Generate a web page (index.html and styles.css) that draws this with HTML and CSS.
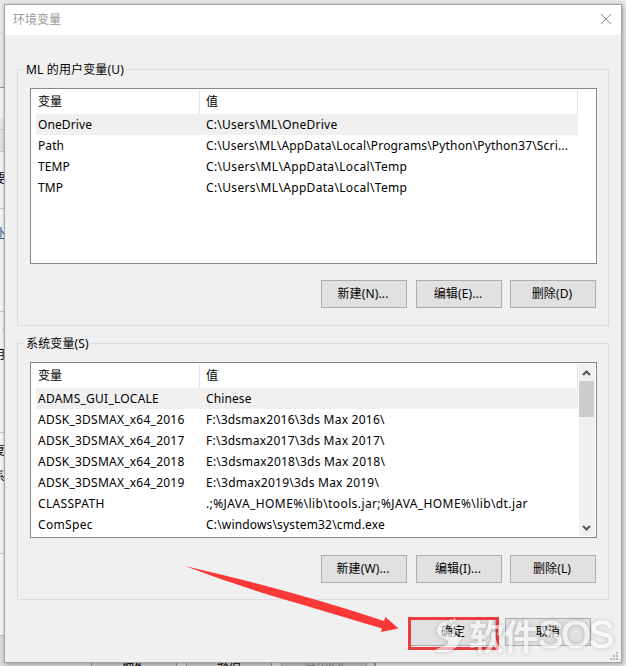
FILE: index.html
```html
<!DOCTYPE html>
<html lang="zh-CN">
<head>
<meta charset="utf-8">
<title>环境变量</title>
<link rel="stylesheet" href="styles.css">
</head>
<body>
<div class="behind">
  <div class="strip">
    <i class="band b1"></i><i class="band b2"></i><i class="band b3"></i><i class="band b4"></i><i class="band b5"></i><i class="band b6"></i><i class="band b7"></i><i class="band b8"></i>
    <span class="t1">要</span><span class="t2 blue">处</span><span class="t3">用</span><span class="t4">复</span><span class="t5">系</span>
  </div>
  <div class="back-buttons"><span>确定</span><span>取消</span><span class="disabled">应用(A)</span></div>
</div>
<main class="dialog">
  <header class="title"><span>环境变量</span>
    <svg class="close" width="12" height="12" viewBox="0 0 12 12"><path d="M1 1 11 11M11 1 1 11"/></svg>
  </header>
  <section class="group user">
    <h2>ML 的用户变量(U)</h2>
    <div class="list">
      <div class="table">
        <div class="head"><span>变量</span><span>值</span></div>
        <div class="row selected"><span>OneDrive</span><span class="ls2">C:\Users\ML\OneDrive</span></div>
        <div class="row"><span>Path</span><span class="ls1">C:\Users\ML\AppData\Local\Programs\Python\Python37\Scri...</span></div>
        <div class="row"><span>TEMP</span><span class="ls3">C:\Users\ML\AppData\Local\Temp</span></div>
        <div class="row"><span>TMP</span><span class="ls3">C:\Users\ML\AppData\Local\Temp</span></div>
      </div>
    </div>
    <div class="actions"><button>新建(N)...</button><button>编辑(E)...</button><button>删除(D)</button></div>
  </section>
  <section class="group system">
    <h2>系统变量(S)</h2>
    <div class="list">
      <div class="table">
        <div class="head"><span>变量</span><span>值</span></div>
        <div class="row selected"><span class="ls2">ADAMS_GUI_LOCALE</span><span>Chinese</span></div>
        <div class="row"><span class="ls2">ADSK_3DSMAX_x64_2016</span><span class="ls2">F:\3dsmax2016\3ds Max 2016\</span></div>
        <div class="row"><span class="ls2">ADSK_3DSMAX_x64_2017</span><span class="ls2">F:\3dsmax2017\3ds Max 2017\</span></div>
        <div class="row"><span class="ls2">ADSK_3DSMAX_x64_2018</span><span class="ls2">E:\3dsmax2018\3ds Max 2018\</span></div>
        <div class="row"><span class="ls2">ADSK_3DSMAX_x64_2019</span><span class="ls2">E:\3dmax2019\3ds Max 2019\</span></div>
        <div class="row"><span class="ls3">CLASSPATH</span><span class="ls4">.;%JAVA_HOME%\lib\tools.jar;%JAVA_HOME%\lib\dt.jar</span></div>
        <div class="row"><span class="ls3">ComSpec</span><span class="ls1">C:\windows\system32\cmd.exe</span></div>
      </div>
      <div class="scrollbar">
        <svg width="16" height="17" viewBox="0 0 16 17"><path d="M4 11 7.500 7.500 11 11"/></svg>
        <div class="thumb"></div>
        <svg class="down" width="16" height="17" viewBox="0 0 16 17"><path d="M4 7 7.500 10.500 11 7"/></svg>
      </div>
    </div>
    <div class="actions"><button>新建(W)...</button><button>编辑(I)...</button><button>删除(L)</button></div>
  </section>
  <footer class="bottom"><button>确定</button><button>取消</button></footer>
  <svg class="grip" width="9" height="9" viewBox="0 0 9 9"><path d="M6 0h2v2H6zM3 3h2v2H3zM6 3h2v2H6zM0 6h2v2H0zM3 6h2v2H3zM6 6h2v2H6z"/></svg>
</main>
<svg class="arrow" width="216" height="68" viewBox="184 565 216 68"><path d="M185 566Q290 590 384 621L385.500 617 398.500 628.500 381 632 382 628.500 300 604Q240 587 185 566z"/></svg>
<div class="highlight"></div>
<div class="watermark">
  <svg width="36" height="38" viewBox="0 0 36 38"><path d="M15 5C6 6 2 12 5 18c3 5 10 4 10 8 0 4-8 4-14 9 8 3 19 1 24-6 4-8-2-11-8-13-6-3-5-7-2-11zM17 3l3 1-1 3-3-1zM21 1l2 3-3 2zM20 8l4 1-1 3-4-1z"/><path d="M7 35C15 33 23 25 29 18c-1 10-10 19-22 17z"/></svg><span class="wm-cn">软件</span><span class="wm-en">SOS</span>
</div>
</body>
</html>
```
FILE: styles.css
```css
* { box-sizing: border-box; }
body {
  margin: 0; width: 626px; height: 666px; padding: 4px; overflow: hidden; position: relative;
  background: #ececec; color: #000;
  font: 12px/21px "Noto Sans", "Noto Sans CJK SC", sans-serif;
}
.behind { position: absolute; inset: 0; overflow: hidden; background: #ebebeb; }
.strip { position: absolute; left: 0; top: 87px; width: 5px; height: 579px; background: #f7f7f7; border-top: 1px solid #999; overflow: hidden; }
.strip span { position: absolute; left: -7px; line-height: 14px; }
.strip .blue { color: #17537f; }
.band { position: absolute; left: 0; width: 5px; height: 1px; background: #ccc; }
.b1 { top: 30px; height: 11px; background: #e9e9e9; }
.b2 { top: 41px; height: 23px; background: #e4e4e4; border-top: 1px solid #ccc; border-bottom: 1px solid #ccc; }
.b3 { top: 120px; }
.b4 { top: 223px; }
.b5 { top: 241px; left: 2px; }
.b6 { top: 344px; }
.b7 { top: 465px; }
.b8 { top: 547px; height: 32px; background: #ddd; border-top: 1px solid #bbb; }
.strip .t1 { top: 84px; }
.strip .t2 { top: 139px; }
.strip .t3 { top: 260px; }
.strip .t4 { top: 356px; }
.strip .t5 { top: 382px; }
.back-buttons { position: absolute; top: 648px; left: 0; width: 376px; height: 18px; padding-left: 91px; display: flex; gap: 9px; background: #ddd; border-right: 2px solid #999; overflow: hidden; }
.back-buttons span { width: 86px; height: 30px; flex: none; text-align: center; border: 1px solid #999; background: #d3d3d3; line-height: 25px; }
.back-buttons .disabled { color: #888; background: #c4c4c4; }
.dialog {
  position: relative; width: 618px; height: 659px; border: 1px solid #a2a2a2; background: #f0f0f0;
  box-shadow: 1px 1px 5px rgba(0,0,0,.36); padding: 0 12px;
}
.title { height: 30px; margin: 0 -12px 34px; padding: 0 9px 0 8px; background: #fff; display: flex; justify-content: space-between; color: #999; line-height: 30px; }
.close { margin-top: 8px; fill: none; stroke: #8b8b8b; stroke-width: 1; }
.group { width: 592px; border: 1px solid #dcdcdc; padding: 0 12px; display: flex; flex-direction: column; }
.user { height: 257px; }
.system { height: 257px; margin-top: 17px; }
.group h2 { font: inherit; letter-spacing: .15px; align-self: flex-start; margin: -11px 0 8px -6px; padding: 0 2px; height: 21px; background: #f0f0f0; }
.list { width: 567px; height: 176px; flex: none; border: 1px solid #828790; background: #fff; padding: 1px 1px 1px 5px; display: flex; justify-content: space-between; }
.table { width: 542px; }
.head, .row { display: grid; grid-template-columns: 164px 1fr; }
.head { height: 24px; line-height: 24px; border-right: 1px solid #e3e3e3; }
.head span:first-child { border-right: 1px solid #e3e3e3; padding-left: 2px; }
.head span:last-child { padding-left: 6px; }
.row { height: 21px; white-space: nowrap; letter-spacing: .1px; }
.row span:first-child { padding-left: 2px; }
.row span:last-child { padding-left: 6px; }
.row .ls1 { letter-spacing: .17px; }
.row .ls2 { letter-spacing: .24px; }
.row .ls3 { letter-spacing: .32px; }
.row .ls4 { letter-spacing: .4px; }
.selected { background: #f0f0f0; }
.scrollbar { width: 16px; height: 172px; background: #f0f0f0; display: flex; flex-direction: column; }
.scrollbar svg { flex: none; fill: none; stroke: #555; stroke-width: 2; }
.thumb { width: 15px; height: 36px; background: #cdcdcd; }
.scrollbar .down { margin-top: auto; }
.actions { display: flex; margin: 16px 0 0 291px; }
.system .actions { margin-top: 17px; }
button { width: 86px; height: 28px; padding: 0 2px 0 0; border: 1px solid #adadad; background: #e1e1e1; color: #000; font: inherit; letter-spacing: .15px; line-height: 24px; }
.actions button:nth-child(2) { margin-left: 9px; }
.actions button:nth-child(3) { margin-left: 8px; }
.bottom { display: flex; gap: 9px; margin: 18px 0 0 393px; }
.bottom button { padding: 0; }
.grip { position: absolute; right: 2px; bottom: 1px; fill: #b9b9b9; }
.arrow { position: absolute; left: 184px; top: 565px; fill: #fa3838; }
.highlight { position: absolute; left: 408px; top: 617px; width: 91px; height: 33px; border: 3px solid #e93e40; }
.watermark { position: absolute; left: 433px; top: 616px; width: 190px; height: 38px; display: flex; align-items: center; color: #fff; opacity: .58; filter: drop-shadow(0 0 2px rgba(0,0,0,.35)); white-space: nowrap; }
.watermark svg { flex: none; fill: #fff; }
.wm-cn { font: 700 35px/38px "Noto Sans CJK SC", sans-serif; letter-spacing: -.5px; }
.wm-en { font: 38px/38px "Liberation Sans", sans-serif; letter-spacing: -2px; -webkit-text-stroke: 1px #fff; }
```
